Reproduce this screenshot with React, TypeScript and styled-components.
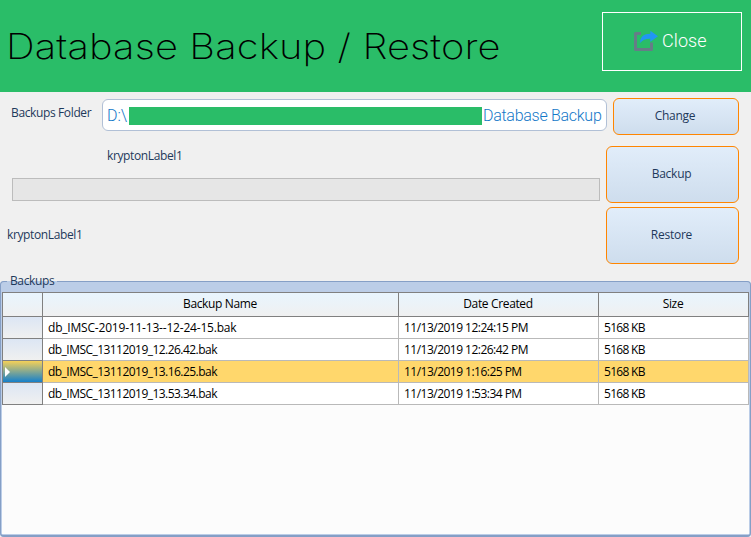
import React from "react";
import styled, { createGlobalStyle, css } from "styled-components";

const GlobalStyle = createGlobalStyle`
  * { box-sizing: border-box; }
  body { margin: 0; background: #f0f0f0; overflow: hidden; }
  button { margin: 0; padding: 0; cursor: pointer; }
`;

const uiFont = css`
  font-family: "Open Sans", "Noto Sans", sans-serif;
  font-size: 12px;
  line-height: 16px;
  white-space: nowrap;
`;

const Window = styled.div`
  ${uiFont}
  width: 751px;
  height: 537px;
  display: flex;
  flex-direction: column;
  background: #f0f0f0;
  color: #1e395b;
`;

const Header = styled.header`
  height: 92px;
  flex: none;
  display: flex;
  justify-content: space-between;
  align-items: flex-start;
  padding: 12px 9px 0 6px;
  background: #2abd68;
`;

const Title = styled.h1`
  margin: 12px 0 0;
  font-family: Inter, sans-serif;
  font-size: 35px;
  font-weight: 250;
  line-height: 44px;
  letter-spacing: 0.1px;
  transform: scaleX(1.14);
  transform-origin: left center;
  color: #000;
`;

const CloseButton = styled.button`
  width: 140px;
  height: 59px;
  display: flex;
  align-items: center;
  gap: 3px;
  padding: 0 0 2px 30px;
  border: 1px solid #fff;
  background: transparent;
  color: #fff;
  font-family: Roboto, sans-serif;
  font-weight: 300;
  font-size: 18px;
  letter-spacing: 0.1px;
`;

const Form = styled.section`
  height: 180px;
  flex: none;
  display: flex;
  justify-content: space-between;
  padding: 6px 12px 0 0;
`;

const Fields = styled.div`
  width: 607px;
  flex: none;
  margin-right: -1px;
`;

const FolderRow = styled.label`
  display: flex;
  align-items: flex-start;
  height: 34px;
  padding: 1px 0 0 11px;
`;

const FolderLabel = styled.span`
  width: 91px;
  padding-top: 6px;
  letter-spacing: -0.37px;
`;

const FolderInput = styled.div`
  width: 505px;
  height: 32px;
  display: flex;
  align-items: center;
  padding: 1px 4px 0 4px;
  border: 1px solid #b1c0d6;
  border-radius: 6px;
  background: #fff;
  color: #1478c8;
  font-family: Roboto, sans-serif;
  font-weight: 300;
  font-size: 16px;
  line-height: 20px;
`;

const Drive = styled.span`
  width: 22px;
  flex: none;
`;

const Redaction = styled.span`
  width: 353px;
  height: 18px;
  flex: none;
  margin-right: 1px;
  background: #2abd68;
`;

const FolderName = styled.span`
  letter-spacing: -0.28px;
`;

const Status = styled.div<{ $left: number; $top: number }>`
  margin: ${(p) => p.$top}px 0 0 ${(p) => p.$left}px;
  letter-spacing: -0.38px;
`;

const Progress = styled.div`
  width: 588px;
  height: 23px;
  margin: 14px 0 0 12px;
  border: 1px solid #bcbcbc;
  background: #e6e6e6;
`;

const Actions = styled.div`
  display: flex;
  flex-direction: column;
  align-items: flex-end;
  flex: none;
  width: 133px;
`;

const ActionButton = styled.button<{ $compact?: boolean }>`
  ${uiFont}
  width: ${(p) => (p.$compact ? 126 : 133)}px;
  height: ${(p) => (p.$compact ? 37 : 57)}px;
  margin-bottom: ${(p) => (p.$compact ? 11 : 4)}px;
  padding: 0 2px 2px 0;
  border: 1px solid #ff8500;
  border-radius: 6px;
  background: linear-gradient(#e1edfa, #cedded);
  color: #1e395b;
  letter-spacing: -0.25px;
`;

const Group = styled.fieldset`
  flex: 1;
  min-width: 0;
  min-height: 0;
  margin: 0;
  padding: 0 1px 1px 1px;
  border: 1px solid #859fc6;
  border-bottom-width: 2px;
  border-radius: 4px;
  background: #bbcde7;
`;

const Legend = styled.legend`
  height: 19px;
  margin-left: 5px;
  padding: 1px 3px 0;
  letter-spacing: -0.38px;
`;

const GridArea = styled.div`
  height: 242px;
  margin-top: 1px;
  background: #fcfcfc;
`;

const Table = styled.div`
  width: 747px;
  border-top: 1px solid #808080;
  border-left: 1px solid #808080;
  color: #000;
`;

const Row = styled.div<{ $head?: boolean; $selected?: boolean }>`
  display: grid;
  grid-template-columns: 40px 356px 200px 150px;
  height: ${(p) => (p.$head ? 24 : 22)}px;
  background: ${(p) =>
    p.$head ? "linear-gradient(#e8f5fe, #f0f0f0)" : p.$selected ? "#ffd76c" : "#fff"};
`;

const Cell = styled.div<{ $head?: boolean; $tracking?: number }>`
  display: flex;
  align-items: center;
  justify-content: ${(p) => (p.$head ? "center" : "flex-start")};
  padding: ${(p) => (p.$head ? "0 1px 1px 0" : "0 5px 0")};
  border-right: 1px solid ${(p) => (p.$head ? "#808080" : "#b9b9b9")};
  border-bottom: 1px solid ${(p) => (p.$head ? "#808080" : "#b9b9b9")};
  letter-spacing: ${(p) => p.$tracking ?? -0.35}px;
`;

const RowHandle = styled.div<{ $selected?: boolean }>`
  display: flex;
  align-items: center;
  padding-left: 2px;
  border-right: 1px solid #808080;
  border-bottom: 1px solid #808080;
  background: ${(p) =>
    p.$selected ? "linear-gradient(#f4d058, #1580cb)" : "linear-gradient(#dce6f4, #f0f0f0)"};
`;

const CornerCell = styled.div`
  border-right: 1px solid #808080;
  border-bottom: 1px solid #808080;
`;

const ShareIcon = () => (
  <svg width="26" height="22" viewBox="0 0 26 22" aria-hidden="true">
    <path d="M8 3.5H2.5V19.5H18.5V12.5" fill="none" stroke="#667d87" strokeWidth="3" strokeLinejoin="round" />
    <path
      d="M17.3 0.7 25 6.3 17.3 11.8V8.8C12.5 8.6 10 10 7.2 13 6.7 7 11 3.8 17.3 3.8Z"
      fill="#2196f3"
    />
  </svg>
);

const rows = [
  { name: "db_IMSC-2019-11-13--12-24-15.bak", date: "11/13/2019 12:24:15 PM", tracking: -0.2 },
  { name: "db_IMSC_13112019_12.26.42.bak", date: "11/13/2019 12:26:42 PM", tracking: -0.54 },
  { name: "db_IMSC_13112019_13.16.25.bak", date: "11/13/2019 1:16:25 PM", tracking: -0.54, selected: true },
  { name: "db_IMSC_13112019_13.53.34.bak", date: "11/13/2019 1:53:34 PM", tracking: -0.54 },
];

export default function App() {
  return (
    <Window>
      <GlobalStyle />
      <Header>
        <Title>Database Backup / Restore</Title>
        <CloseButton>
          <ShareIcon />
          Close
        </CloseButton>
      </Header>
      <Form>
        <Fields>
          <FolderRow>
            <FolderLabel>Backups Folder</FolderLabel>
            <FolderInput>
              <Drive>D:\</Drive>
              <Redaction />
              <FolderName>Database Backup</FolderName>
            </FolderInput>
          </FolderRow>
          <Status $left={107} $top={16}>kryptonLabel1</Status>
          <Progress />
          <Status $left={7} $top={26}>kryptonLabel1</Status>
        </Fields>
        <Actions>
          <ActionButton $compact>Change</ActionButton>
          <ActionButton>Backup</ActionButton>
          <ActionButton>Restore</ActionButton>
        </Actions>
      </Form>
      <Group>
        <Legend>Backups</Legend>
        <GridArea>
          <Table>
            <Row $head>
              <CornerCell />
              <Cell $head>Backup Name</Cell>
              <Cell $head>Date Created</Cell>
              <Cell $head>Size</Cell>
            </Row>
            {rows.map((row) => (
              <Row key={row.name} $selected={row.selected}>
                <RowHandle $selected={row.selected}>
                  {row.selected && (
                    <svg width="5" height="10" viewBox="0 0 5 10" aria-hidden="true">
                      <path d="M0 0 5 5 0 10Z" fill="#fff" />
                    </svg>
                  )}
                </RowHandle>
                <Cell $tracking={row.tracking}>{row.name}</Cell>
                <Cell $tracking={-0.52}>{row.date}</Cell>
                <Cell $tracking={-0.7}>5168 KB</Cell>
              </Row>
            ))}
          </Table>
        </GridArea>
      </Group>
    </Window>
  );
}
